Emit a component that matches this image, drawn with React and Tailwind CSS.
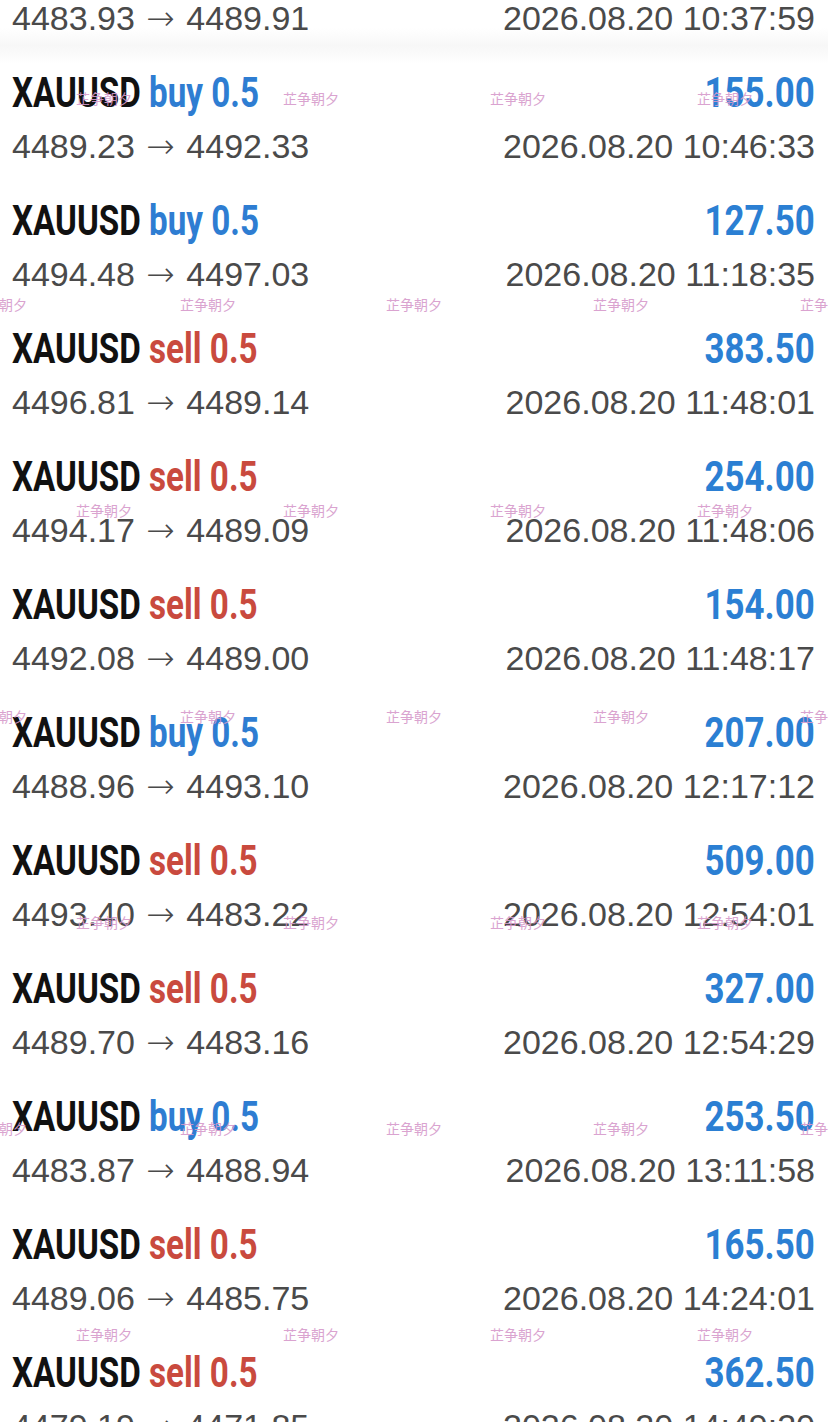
const rows = [
  { side: "buy", amt: "0.00", from: "4483.93", to: "4489.91", time: "10:37:59" },
  { side: "buy", amt: "155.00", from: "4489.23", to: "4492.33", time: "10:46:33" },
  { side: "buy", amt: "127.50", from: "4494.48", to: "4497.03", time: "11:18:35" },
  { side: "sell", amt: "383.50", from: "4496.81", to: "4489.14", time: "11:48:01" },
  { side: "sell", amt: "254.00", from: "4494.17", to: "4489.09", time: "11:48:06" },
  { side: "sell", amt: "154.00", from: "4492.08", to: "4489.00", time: "11:48:17" },
  { side: "buy", amt: "207.00", from: "4488.96", to: "4493.10", time: "12:17:12" },
  { side: "sell", amt: "509.00", from: "4493.40", to: "4483.22", time: "12:54:01" },
  { side: "sell", amt: "327.00", from: "4489.70", to: "4483.16", time: "12:54:29" },
  { side: "buy", amt: "253.50", from: "4483.87", to: "4488.94", time: "13:11:58" },
  { side: "sell", amt: "165.50", from: "4489.06", to: "4485.75", time: "14:24:01" },
  { side: "sell", amt: "362.50", from: "4479.19", to: "4471.85", time: "14:49:20" },
];

const wmRowsY = [98, 304, 510, 716, 922, 1128, 1334];
const evenX = [76, 283, 490, 697];
const oddX = [-29, 180, 386, 593, 800];

function Row({ r }) {
  return (
    <div className="h-[128px] pl-[12px] pr-[13px] pt-[9px] flex flex-col">
      <div className="flex justify-between h-[48px] leading-[48px] font-['Roboto',sans-serif] font-bold text-[42px] whitespace-nowrap">
        <span className="inline-block origin-left scale-x-[0.79]">
          <span className="text-[#111111]">XAUUSD</span>{" "}
          <span className={r.side === "buy" ? "text-[#2e7dd2]" : "text-[#c94a3e]"}>
            {r.side} 0.5
          </span>
        </span>
        <span className="inline-block origin-right scale-x-[0.83] text-[#2b7fd3]">{r.amt}</span>
      </div>
      <div className="mt-[9px] flex justify-between h-[40px] leading-[40px] font-['Liberation_Sans',Arial,sans-serif] text-[34px] text-[#4a4a4a] whitespace-nowrap">
        <span>
          {r.from}{" "}
          <span className="inline-block mx-[2px] font-['DejaVu_Sans',sans-serif] font-extralight text-[34px]">→</span>{" "}
          {r.to}
        </span>
        <span>2026.08.20 {r.time}</span>
      </div>
    </div>
  );
}

export default function App() {
  return (
    <div className="relative w-[828px] h-[1422px] overflow-hidden bg-white">
      <div className="absolute left-0 top-[28px] w-full h-[36px] bg-gradient-to-b from-white via-[#f5f5f5] to-white opacity-80" />
      <div className="relative -mt-[68px] flex flex-col">
        {rows.map((r, i) => (
          <Row key={i} r={r} />
        ))}
      </div>
      {wmRowsY.map((y, i) =>
        (i % 2 === 0 ? evenX : oddX).map((x) => (
          <span
            key={`${y}-${x}`}
            className="absolute text-[14px] leading-[16px] text-[#d69acb] whitespace-nowrap font-['Noto_Sans_CJK_SC',sans-serif] opacity-90"
            style={{ left: x, top: y - 8 }}
          >
            芷争朝夕
          </span>
        ))
      )}
    </div>
  );
}
